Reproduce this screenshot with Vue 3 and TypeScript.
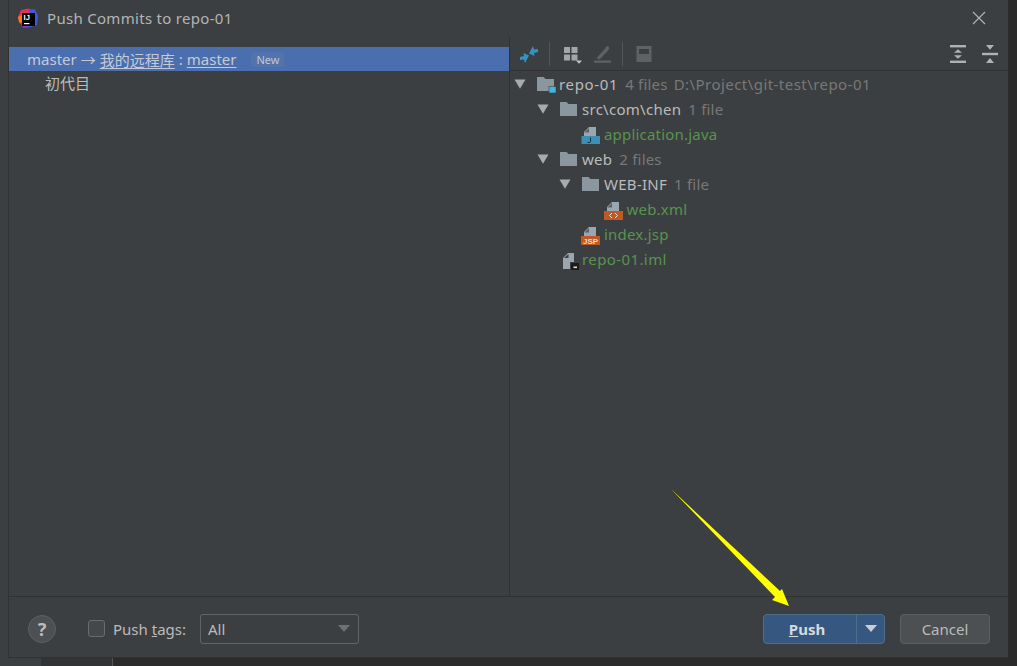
<script setup lang="ts">
interface Node {
  name: string
  level: number
  kind: 'root' | 'folder' | 'java' | 'xml' | 'jsp' | 'iml'
  meta?: string
  extra?: string
}

const nodes: Node[] = [
  { name: 'repo-01', level: 0, kind: 'root', meta: '4 files', extra: 'D:\\Project\\git-test\\repo-01' },
  { name: 'src\\com\\chen', level: 1, kind: 'folder', meta: '1 file' },
  { name: 'application.java', level: 2, kind: 'java' },
  { name: 'web', level: 1, kind: 'folder', meta: '2 files' },
  { name: 'WEB-INF', level: 2, kind: 'folder', meta: '1 file' },
  { name: 'web.xml', level: 3, kind: 'xml' },
  { name: 'index.jsp', level: 2, kind: 'jsp' },
  { name: 'repo-01.iml', level: 1, kind: 'iml' },
]

const indent = [4, 27, 49, 71.5]
const isFolder = (n: Node) => n.kind === 'root' || n.kind === 'folder'
</script>

<template>
  <div class="page">
    <div class="dialog">
      <header class="titlebar">
        <svg class="logo" width="20" height="20" viewBox="0 0 20 20">
          <path d="M0 9 L3 2 L11 0.5 L13 5 L4 6 L4 17 L1 14 Z" fill="#e8305f" />
          <path d="M0 9 L4 7 L4 17 L1 14 Z" fill="#f97a12" />
          <path d="M10 1 L17 1.5 L20 8 L19 17 L12 19.5 L5 19 L12 5 Z" fill="#3b5bdb" />
          <path d="M2 15 L5 14 L10 19.5 L5 19.5 Z" fill="#a82bd0" />
          <rect x="4" y="5" width="13" height="13" fill="#000" />
          <rect x="6" y="15" width="5.5" height="1.2" fill="#fff" />
          <text class="logo-text" x="5.6" y="12.4">IJ</text>
        </svg>
        <span class="title">Push Commits to repo-01</span>
        <svg class="close" width="14" height="14" viewBox="0 0 14 14">
          <path d="M1 1 L13 13 M13 1 L1 13" stroke="#b4b6b7" stroke-width="1.1" fill="none" />
        </svg>
      </header>

      <main class="body">
        <section class="commits">
          <div class="branch">
            <span>master</span>
            <span class="arrow-text">→</span>
            <span class="link">我的远程库</span>
            <span class="colon">:</span>
            <span class="link">master</span>
            <span class="badge">New</span>
          </div>
          <div class="commit">初代目</div>
        </section>

        <section class="changes">
          <div class="toolbar">
            <div class="tool-left">
              <svg class="tool" width="20" height="20" viewBox="-1 -2 20 20">
                <path d="M9 7.5 L13 0 L14 3.5 L18 3 L18 6 L14 7 L14.5 10 Z" fill="#3592c4" />
                <path d="M9 9.5 L5 17 L4 13.5 L0 14 L0 11 L4 10 L3.5 7 Z" fill="#3592c4" />
              </svg>
              <i class="sep"></i>
              <svg class="tool group" width="20" height="20" viewBox="0 0 20 20">
                <g fill="#a3a5a7">
                  <rect x="1" y="3" width="6" height="6" rx=".5" />
                  <rect x="8.5" y="3" width="6" height="6" rx=".5" />
                  <rect x="1" y="10.5" width="6" height="6" rx=".5" />
                  <rect x="8.5" y="10.5" width="6" height="6" rx=".5" />
                  <path d="M13 16.5h6l-3 3.2z" fill="#c4c6c8" />
                </g>
              </svg>
              <svg class="tool" width="20" height="20" viewBox="0 0 20 20">
                <path d="M4.5 14 L13.8 4 L16.4 6.2 L7.5 15.5 Z" fill="#5f6264" />
                <circle cx="15.3" cy="4.2" r="1.9" fill="#5f6264" />
                <rect x="2" y="16.5" width="17" height="2.3" fill="#5f6264" />
              </svg>
              <i class="sep"></i>
              <svg class="tool disk" width="20" height="20" viewBox="0 0 20 20">
                <path fill-rule="evenodd" d="M2.5 2h15v16h-15z M5 5v5h10V5z" fill="#5f6264" />
              </svg>
            </div>
            <div class="tool-right">
              <svg width="16" height="18" viewBox="0 0 16 18">
                <g fill="#afb1b3">
                  <rect x="0" y="0" width="16" height="2.4" />
                  <rect x="0" y="15.6" width="16" height="2.4" />
                  <path d="M8 4.2 L12 7.8 H4 Z M8 13.8 L12 10.2 H4 Z" />
                </g>
              </svg>
              <svg width="16" height="18" viewBox="0 0 16 18">
                <g fill="#afb1b3">
                  <rect x="0" y="7.8" width="16" height="2.4" />
                  <path d="M4 0 H12 L8 4.8 Z M4 18 H12 L8 13 Z" />
                </g>
              </svg>
            </div>
          </div>

          <ul class="tree">
            <li v-for="n in nodes" :key="n.name" class="row" :style="{ paddingLeft: indent[n.level] + 'px' }">
              <svg v-if="isFolder(n)" class="caret" width="12" height="12" viewBox="0 0 12 12">
                <path d="M.5 1.5 H11.5 L6 10.8 Z" fill="#a8aaac" />
              </svg>
              <span v-else-if="n.kind !== 'iml'" class="caret-gap"></span>

              <svg v-if="isFolder(n)" class="ico" width="20" height="18" viewBox="0 0 20 18">
                <path d="M1 2 H7.5 L9.5 4 H18 V16 H1 Z" fill="#8a979f" />
                <rect v-if="n.kind === 'root'" x="13" y="11.5" width="7" height="6.5" fill="#40b6e0" stroke="#3c3f41" stroke-width=".6" />
              </svg>

              <svg v-else-if="n.kind === 'iml'" class="ico low iml" width="20" height="20" viewBox="0 0 20 20">
                <path d="M1 8 L6 3 H12 V12 H8 V19 H1 Z" fill="#9aa7b0" />
                <path d="M2 8 L6.5 8 L6.5 4 Z" fill="#3c3f41" />
                <rect x="9" y="13" width="8" height="7" fill="#1c1c1c" />
                <rect x="11.5" y="16.5" width="3.5" height="1.6" fill="#ddd" />
              </svg>

              <svg v-else class="ico low" width="20" height="20" viewBox="0 0 20 20">
                <path d="M3 7 L8 2 H15 V11 H3 Z" fill="#9aa7b0" />
                <path d="M3.4 7.4 H8 V3 Z" fill="#5a6268" />
                <template v-if="n.kind === 'java'">
                  <rect x="0.5" y="11" width="18.5" height="8" fill="#3d8fb5" />
                  <path d="M9.5 12.5 V16.5 Q9.5 17.5 8 17.5 H6.5" stroke="#16303d" stroke-width="1" fill="none" />
                </template>
                <template v-else>
                  <rect x="0" y="11" width="19" height="9" fill="#c05a24" />
                  <path v-if="n.kind === 'xml'" d="M8 13 L5.5 15.5 L8 18 M11 13 L13.5 15.5 L11 18" stroke="#eadbd0" stroke-width="1" fill="none" />
                  <text v-else x="9.5" y="18.6" class="jsp">JSP</text>
                </template>
              </svg>

              <span class="name" :class="[isFolder(n) ? '' : 'file', 'k-' + n.kind]">{{ n.name }}</span>
              <span v-if="n.meta" class="meta">{{ n.meta }}</span>
              <span v-if="n.extra" class="meta extra">{{ n.extra }}</span>
            </li>
          </ul>
        </section>
      </main>

      <footer class="footer">
        <div class="help">?</div>
        <label class="tags">
          <span class="check"></span>
          <span>Push <u>t</u>ags:</span>
        </label>
        <div class="combo">
          <span>All</span>
          <svg width="12" height="7" viewBox="0 0 12 7"><path d="M0 0 H12 L6 7 Z" fill="#6e7173" /></svg>
        </div>
        <div class="spacer"></div>
        <div class="push">
          <span class="push-main"><u>P</u>ush</span>
          <span class="push-drop">
            <svg width="12" height="7" viewBox="0 0 12 7"><path d="M0 0 H12 L6 7 Z" fill="#c9ced2" /></svg>
          </span>
        </div>
        <button class="cancel" type="button">Cancel</button>
      </footer>

      <svg class="annotation" width="130" height="130" viewBox="0 0 130 130">
        <path d="M1 1 L110 103 L112 101 L119 118 L102 112 L105 109 Z" fill="#ffff00" />
      </svg>
    </div>

    <div class="under">
      <div class="under-a"></div>
      <div class="under-b"></div>
      <div class="under-c"></div>
    </div>
  </div>
</template>

<style>
html, body { margin: 0; background: #2b2b2b; }
</style>

<style scoped>
.page {
  width: 1017px;
  height: 666px;
  overflow: hidden;
  background: linear-gradient(to right, #3c3f41 8px, #2b2b2b 8px);
  font-family: "Noto Sans", "Noto Sans CJK SC", sans-serif;
  font-size: 15px;
  color: #bbbbbb;
}
.dialog {
  position: relative;
  margin-left: 8px;
  width: 1000px;
  height: 658px;
  box-sizing: border-box;
  border-left: 1px solid #323232;
  border-bottom: 1px solid #323232;
  background: #3c3f41;
  display: flex;
  flex-direction: column;
}
.titlebar {
  height: 37px;
  flex: none;
  display: flex;
  align-items: center;
  padding: 0 22px 2px 9px;
  box-sizing: border-box;
}
.logo { flex: none; }
.logo-text {
  font-family: "Liberation Sans", sans-serif;
  font-size: 7.5px;
  font-weight: 700;
  fill: #fff;
}
.title { margin-left: 9px; flex: 1; color: #b3b5b6; letter-spacing: .3px; }
.close { flex: none; }
.body {
  flex: 1;
  min-height: 0;
  display: flex;
  border-bottom: 1px solid #323232;
}
.commits {
  width: 500px;
  flex: none;
  border-right: 1px solid #323232;
  padding-top: 10px;
  box-sizing: content-box;
}
.branch {
  height: 24px;
  background: #4b6eaf;
  display: flex;
  align-items: center;
  padding-left: 18px;
  color: #c4cad6;
  white-space: nowrap;
}
.arrow-text { margin: 0 4px; }
.colon { margin: 0 4px; }
.link { text-decoration: underline; text-underline-offset: 2px; }
.badge {
  margin-left: 15px;
  height: 15px;
  line-height: 15px;
  padding: 0 5px;
  border-radius: 3px;
  background: #5573ab;
  font-size: 11px;
  color: #bfc8d8;
}
.commit {
  height: 25px;
  line-height: 25px;
  padding-left: 36px;
}
.changes {
  flex: 1;
  min-width: 0;
}
.toolbar {
  height: 34px;
  box-sizing: border-box;
  border-bottom: 1px solid #323232;
  display: flex;
  align-items: center;
  justify-content: space-between;
  padding: 0 10px 0 9px;
}
.tool-left { display: flex; align-items: center; }
.tool { flex: none; }
.group { margin-right: 9px; margin-left: 1px; }
.disk { margin-left: -1px; }
.sep {
  width: 1px;
  height: 24px;
  background: #515658;
  margin: 0 12px 0 10px;
}
.tool-right { display: flex; align-items: center; gap: 16px; }
.tree {
  list-style: none;
  margin: 0;
  padding: 0;
}
.row {
  height: 25px;
  display: flex;
  align-items: center;
  white-space: nowrap;
  box-sizing: border-box;
}
.caret { flex: none; margin-right: 10px; }
.caret-gap { width: 22px; flex: none; }
.ico { flex: none; margin-right: 3px; }
.low { margin-top: 3px; }
.iml { margin-right: 0.5px; margin-left: 24.5px; }
.jsp {
  font-family: "Liberation Sans", sans-serif;
  font-size: 8px;
  font-weight: 700;
  fill: #f0d9c8;
  text-anchor: middle;
}
.name { color: #bbbbbb; letter-spacing: .28px; }
.file { color: #59934f; letter-spacing: .2px; }
.k-root { letter-spacing: .65px; }
.k-iml { letter-spacing: .4px; }
.meta { color: #787878; margin-left: 7px; letter-spacing: .2px; }
.extra { margin-left: 6px; letter-spacing: .45px; }
.footer {
  height: 60px;
  flex: none;
  box-sizing: border-box;
  display: flex;
  align-items: center;
  padding: 3px 18px 0 19px;
}
.help {
  width: 28px;
  height: 28px;
  border-radius: 50%;
  box-sizing: border-box;
  border: 1px solid #5e6060;
  background: #4c5052;
  color: #bbbbbb;
  display: flex;
  align-items: center;
  justify-content: center;
  font-weight: 700;
  font-size: 18px;
}
.tags {
  display: flex;
  align-items: center;
  margin-left: 32px;
  gap: 8px;
}
.check {
  width: 17px;
  height: 17px;
  box-sizing: border-box;
  border: 1px solid #6b6b6b;
  border-radius: 3px;
  background: #43494a;
}
.combo {
  margin-left: 14px;
  width: 159px;
  height: 30px;
  box-sizing: border-box;
  border: 1px solid #646464;
  border-radius: 3px;
  display: flex;
  align-items: center;
  justify-content: space-between;
  padding: 0 8px 0 7px;
}
.spacer { flex: 1; }
.push {
  width: 122px;
  height: 30px;
  box-sizing: border-box;
  border: 1px solid #4c708c;
  border-radius: 4px;
  background: #365880;
  display: flex;
  align-items: stretch;
  color: #d6dade;
  font-weight: 700;
}
.push-main {
  width: 93px;
  box-sizing: border-box;
  padding-right: 6px;
  text-align: center;
  line-height: 28px;
  border-right: 1px solid #4c708c;
}
.push-drop {
  flex: 1;
  display: flex;
  align-items: center;
  justify-content: center;
}
.cancel {
  margin-left: 15px;
  width: 90px;
  height: 30px;
  box-sizing: border-box;
  border: 1px solid #5e6060;
  border-radius: 4px;
  background: #4c5052;
  color: #bbbbbb;
  font: inherit;
  padding: 0;
}
.annotation {
  position: absolute;
  left: 661px;
  top: 488px;
  pointer-events: none;
}
.under {
  height: 8px;
  display: flex;
}
.under-a { width: 41px; background: #3c3f41; }
.under-b { width: 71px; background: #313335; border-right: 1px solid #555; }
.under-c { flex: 1; background: #2b2b2b; }
</style>
